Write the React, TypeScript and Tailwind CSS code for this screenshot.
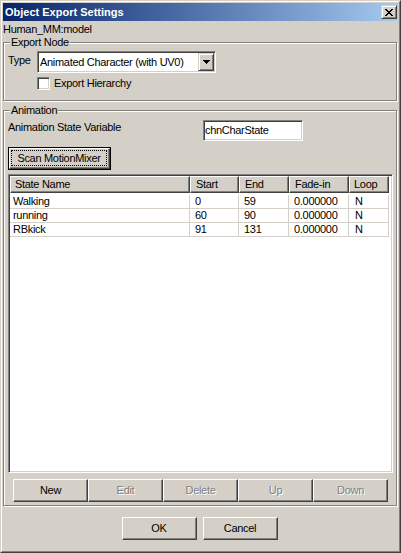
import React from "react";

const raised =
  "border border-t-white border-l-white border-r-[#404040] border-b-[#404040] shadow-[inset_-1px_-1px_0_#808080]";
const raised2 =
  "border border-t-[#d4d0c8] border-l-[#d4d0c8] border-r-[#404040] border-b-[#404040] shadow-[inset_1px_1px_0_#fff,inset_-1px_-1px_0_#808080]";
const sunken =
  "border border-t-[#808080] border-l-[#808080] border-r-white border-b-white shadow-[inset_1px_1px_0_#404040,inset_-1px_-1px_0_#d4d0c8]";
const group =
  "relative mr-[1px] border border-[#808080] shadow-[inset_1px_1px_0_#fff,1px_1px_0_#fff]";
const disabledText = "text-[#808080] [text-shadow:1px_1px_0_#fff]";

const cols = [
  { name: "State Name", w: "w-[180px]", hp: "pl-[4px]", dp: "pl-[3px]" },
  { name: "Start", w: "w-[49px]", hp: "pl-[5px]", dp: "pl-[5px]" },
  { name: "End", w: "w-[50px]", hp: "pl-[5px]", dp: "pl-[5px]" },
  { name: "Fade-in", w: "w-[60px]", hp: "pl-[5px]", dp: "pl-[5px]" },
  { name: "Loop", w: "w-[40px]", hp: "pl-[4px]", dp: "pl-[6px]" },
];

const rows = [
  ["Walking", "0", "59", "0.000000", "N"],
  ["running", "60", "90", "0.000000", "N"],
  ["RBkick", "91", "131", "0.000000", "N"],
];

function CloseGlyph() {
  const px = [
    "xx....xx",
    ".xx..xx.",
    "..xxxx..",
    "...xx...",
    "..xxxx..",
    ".xx..xx.",
    "xx....xx",
  ];
  return (
    <svg width="8" height="7" viewBox="0 0 8 7" shapeRendering="crispEdges">
      {px.map((r, y) =>
        r.split("").map((c, x) =>
          c === "x" ? <rect key={`${x}-${y}`} x={x} y={y} width="1" height="1" fill="#000" /> : null
        )
      )}
    </svg>
  );
}

function DownArrow() {
  return (
    <svg width="7" height="4" viewBox="0 0 7 4" shapeRendering="crispEdges">
      <rect x="0" y="0" width="7" height="1" fill="#000" />
      <rect x="1" y="1" width="5" height="1" fill="#000" />
      <rect x="2" y="2" width="3" height="1" fill="#000" />
      <rect x="3" y="3" width="1" height="1" fill="#000" />
    </svg>
  );
}

function Btn({ label, disabled, w = "w-[75px]" }: { label: string; disabled?: boolean; w?: string }) {
  return (
    <div className={`${w} h-[23px] ${raised} flex items-center justify-center ${disabled ? disabledText : ""}`}>
      {label}
    </div>
  );
}

export default function App() {
  return (
    <div className="w-[401px] h-[553px] border border-t-[#d4d0c8] border-l-[#d4d0c8] border-r-[#404040] border-b-[#404040] font-['Liberation_Sans',Arial,sans-serif] text-[11px] leading-[13px] text-black tracking-[-0.3px]">
      <div className="h-full flex flex-col bg-[#d4d0c8] border border-t-white border-l-white border-r-[#808080] border-b-[#808080] p-[1px]">
        {/* Title bar */}
        <div className="h-[18px] shrink-0 flex items-center justify-between pl-[2px] pr-[1px] bg-gradient-to-r from-[#0a246a] to-[#a6caf0]">
          <span className="font-bold text-white tracking-normal">Object Export Settings</span>
          <div className={`w-[16px] h-[14px] ${raised2} bg-[#d4d0c8] flex items-center justify-center`}>
            <CloseGlyph />
          </div>
        </div>

        <div className="mt-[2px] h-[13px]">Human_MM:model</div>

        {/* Export Node group */}
        <div className={`${group} mt-[6px] pt-[8px] pb-[10px]`}>
          <span className="absolute left-[6px] -top-[7px] px-[1px] bg-[#d4d0c8] leading-[13px]">Export Node</span>
          <div className="flex items-start pl-[4px]">
            <span className="w-[29px] mt-[3px]">Type</span>
            <div className={`w-[179px] h-[22px] ${sunken} bg-white p-[1px] flex items-center`}>
              <span className="flex-1 pl-[1px]">Animated Character (with UV0)</span>
              <div className={`w-[16px] h-[18px] ${raised2} bg-[#d4d0c8] flex items-center justify-center`}>
                <DownArrow />
              </div>
            </div>
          </div>
          <div className="mt-[4px] flex items-center pl-[33px]">
            <div className={`w-[13px] h-[13px] ${sunken} bg-white`} />
            <span className="ml-[4px]">Export Hierarchy</span>
          </div>
        </div>

        {/* Animation group */}
        <div className={`${group} mt-[9px] pt-[9px] pb-[3px]`}>
          <span className="absolute left-[6px] -top-[7px] px-[1px] bg-[#d4d0c8] leading-[13px]">Animation</span>
          <div className="flex items-start pl-[4px]">
            <span className="w-[195px] mt-[1px]">Animation State Variable</span>
            <div className={`w-[100px] h-[21px] ${sunken} bg-white flex items-center pl-[1px]`}>
              <span>chnCharState</span>
            </div>
          </div>

          <div className="mt-[6px] ml-[4px] w-[103px] h-[23px] border border-black">
            <div className={`h-full ${raised} pl-[1px] pt-[1px] pr-[2px] pb-[2px]`}>
              <div className="h-full border border-dotted border-black flex items-center justify-center">
                Scan MotionMixer
              </div>
            </div>
          </div>

          {/* List view */}
          <div className={`mt-[4px] ml-[4px] w-[385px] h-[299px] ${sunken} bg-white p-[1px]`}>
            <div className="flex h-[17px]">
              {cols.map((c) => (
                <div key={c.name} className={`${c.w} h-full ${raised} bg-[#d4d0c8] ${c.hp} flex items-center`}>
                  {c.name}
                </div>
              ))}
            </div>
            <div className="pt-[2px]">
              {rows.map((r, i) => (
                <div key={i} className="flex h-[14px] w-[379px] border-b border-[#d4d0c8]">
                  {r.map((v, j) => (
                    <div key={j} className={`${cols[j].w} h-full border-r border-[#d4d0c8] ${cols[j].dp} flex items-center`}>
                      {v}
                    </div>
                  ))}
                </div>
              ))}
            </div>
          </div>

          <div className="mt-[6px] ml-[9px] flex">
            <Btn label="New" />
            <Btn label="Edit" disabled />
            <Btn label="Delete" disabled />
            <Btn label="Up" disabled />
            <Btn label="Down" disabled />
          </div>
        </div>

        {/* OK / Cancel */}
        <div className="mt-[11px] flex justify-center gap-[6px] pr-[2px]">
          <Btn label="OK" />
          <Btn label="Cancel" />
        </div>
      </div>
    </div>
  );
}
